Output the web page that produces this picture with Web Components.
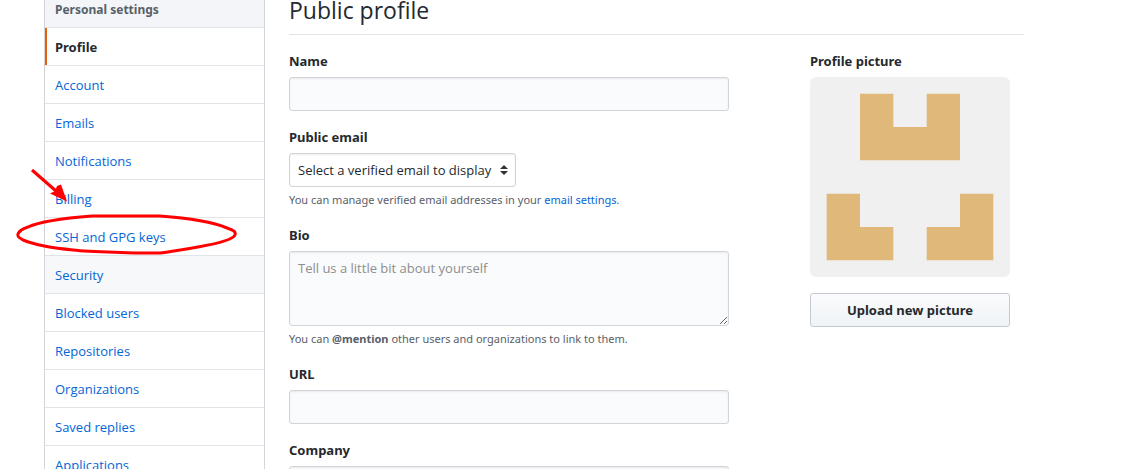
<!DOCTYPE html>
<html lang="en">
<head>
<meta charset="utf-8">
<meta name="viewport" content="width=device-width, initial-scale=1">
<title>Public profile</title>
<style>
html { overflow: hidden; }
body { margin: 0; background: #fff; color: #24292e; font: 13px/21px "Open Sans", "Noto Sans", sans-serif; --bold-font: "Noto Sans", "Open Sans", sans-serif; }
</style>
</head>
<body>
<settings-page>
  <settings-menu slot="menu" heading="Personal settings">
    <menu-item current>Profile</menu-item>
    <menu-item>Account</menu-item>
    <menu-item>Emails</menu-item>
    <menu-item>Notifications</menu-item>
    <menu-item>Billing</menu-item>
    <menu-item>SSH and GPG keys</menu-item>
    <menu-item active>Security</menu-item>
    <menu-item>Blocked users</menu-item>
    <menu-item>Repositories</menu-item>
    <menu-item>Organizations</menu-item>
    <menu-item>Saved replies</menu-item>
    <menu-item>Applications</menu-item>
  </settings-menu>
  <span slot="title">Public profile</span>
  <text-field label="Name"></text-field>
  <select-field label="Public email" option="Select a verified email to display">You can manage verified email addresses in your <hint-link>email settings</hint-link>.</select-field>
  <area-field label="Bio" placeholder="Tell us a little bit about yourself">You can <strong>@mention</strong> other users and organizations to link to them.</area-field>
  <text-field label="URL"></text-field>
  <text-field label="Company"></text-field>
  <profile-picture slot="picture"></profile-picture>
</settings-page>

<script>
const define = (name, render) => customElements.define(name, class extends HTMLElement {
  constructor() {
    super();
    this.attachShadow({ mode: "open" });
  }
  connectedCallback() {
    this.shadowRoot.innerHTML = render(this);
  }
});

const fieldStyles = `
  :host { display: block; }
  * { box-sizing: border-box; }
  label { display: block; padding-top: 1px; margin-bottom: 5px; font-family: var(--bold-font); font-weight: 700; }
  input, textarea, select {
    display: block; margin: 0; padding: 6px 8px; font: inherit; line-height: 20px; color: inherit;
    border: 1px solid #d1d5da; border-radius: 3px; background: #fafbfc;
    box-shadow: inset 0 1px 2px rgba(27, 31, 35, .075);
  }
  input { width: 100%; height: 34px; }
  .hint { margin: 4px 0 0; font-family: var(--bold-font); font-size: 11px; line-height: 18px; color: #586069; }`;

define("settings-page", () => `
  <style>
    :host { display: block; padding-left: 44px; margin-top: -10px; }
    .container { display: flex; gap: 24px; max-width: 980px; }
    aside { flex: 0 0 221px; }
    main { flex: 1; min-width: 0; }
    h1 { margin: 0 0 15px; padding-bottom: 4px; border-bottom: 1px solid #e1e4e8; font-size: 23px; line-height: 40px; font-weight: 400; }
    .columns { display: flex; justify-content: space-between; gap: 24px; padding-right: 14px; }
    form { flex: 0 1 440px; display: grid; gap: 15px; }
  </style>
  <div class="container">
    <aside><slot name="menu"></slot></aside>
    <main>
      <h1><slot name="title"></slot></h1>
      <div class="columns">
        <form><slot></slot></form>
        <slot name="picture"></slot>
      </div>
    </main>
  </div>`);

define("settings-menu", el => `
  <style>
    :host { display: block; position: relative; }
    nav { border: solid #d1d5da; border-width: 0 1px; }
    h2 { margin: 0; padding: 9px 10px 7px; font-family: var(--bold-font); font-size: 12px; line-height: 21px; color: #586069; background: #f3f5f8; border-bottom: 1px solid #e1e4e8; }
    svg { position: absolute; left: -44px; top: 10px; pointer-events: none; }
  </style>
  <nav aria-label="${el.getAttribute("heading")}">
    <h2>${el.getAttribute("heading")}</h2>
    <slot></slot>
  </nav>
  <svg width="250" height="270" viewBox="0 0 250 270" fill="none" stroke="#f00" aria-hidden="true">
    <path d="M32 170 L56 191" stroke-width="3"/>
    <path d="M67 201.500 L50 193.500 L55 191 L57 186 L61 184.500 Z" fill="#f00" stroke="none"/>
    <path d="M18 234 C19 231 22 229 28 227 C41 221 66 218 92 216 L160 216 C188 218 213 222 227 228 C234 230 236 232 235 235 C233 240 215 244 198 247 C186 249 175 251 160 253 L136 253 C112 252 90 252 73 250 C51 248 33 244 23 240 C18 237 17 236 18 234 Z" stroke-width="3"/>
  </svg>`);

define("menu-item", el => `
  <style>
    :host { display: block; }
    a { display: block; padding: 9px 10px 7px; color: #0366d6; text-decoration: none; border-bottom: 1px solid #e1e4e8; }
    :host([active]) a { background: #f6f8fa; }
    :host([current]) { position: relative; }
    :host([current]) a { font-family: var(--bold-font); font-weight: 700; color: #24292e; }
    :host([current]) a::before { content: ""; position: absolute; left: 0; top: 0; bottom: 1px; width: 2px; background: #e36209; }
  </style>
  <a href="#" ${el.hasAttribute("current") ? 'aria-current="page"' : ""}><slot></slot></a>`);

define("hint-link", () => `
  <style>
    :host { display: inline; }
    a { color: #0366d6; text-decoration: none; }
  </style><a href="#"><slot></slot></a>`);

define("text-field", el => `
  <style>${fieldStyles}</style>
  <label for="control">${el.getAttribute("label")}</label>
  <input id="control" type="text">`);

define("select-field", el => `
  <style>${fieldStyles}
    .select { position: relative; width: fit-content; }
    select { appearance: none; height: 34px; padding-right: 23px; background: #fff; }
    svg { position: absolute; right: 8px; top: 12px; pointer-events: none; }
  </style>
  <label for="control">${el.getAttribute("label")}</label>
  <div class="select">
    <select id="control"><option>${el.getAttribute("option")}</option></select>
    <svg width="8" height="10" viewBox="0 0 8 10" fill="#333" aria-hidden="true"><path d="M4 0 L8 4 H0 Z M0 6 H8 L4 10 Z"/></svg>
  </div>
  <p class="hint"><slot></slot></p>`);

define("area-field", el => `
  <style>${fieldStyles}
    textarea { width: 100%; height: 75px; resize: vertical; }
    textarea::placeholder { color: #8e8e8e; }
  </style>
  <label for="control">${el.getAttribute("label")}</label>
  <textarea id="control" placeholder="${el.getAttribute("placeholder")}"></textarea>
  <p class="hint"><slot></slot></p>`);

define("profile-picture", () => `
  <style>
    :host { display: block; flex: 0 0 200px; }
    h2 { margin: 0 0 5px; padding-top: 1px; font-family: var(--bold-font); font-size: 13px; line-height: 21px; }
    svg { display: block; width: 100%; border-radius: 6px; background: #f0f0f0; }
    button {
      width: 100%; height: 34px; margin-top: 16px; padding: 0 12px; font: inherit; font-family: var(--bold-font); font-weight: 700; color: #24292e;
      border: 1px solid #c6cace; border-radius: 3px; background: linear-gradient(#fafbfc, #eff3f6); cursor: pointer;
    }
  </style>
  <h2>Profile picture</h2>
  <svg viewBox="0 0 12 12" fill="#e0b97a" role="img" aria-label="Profile picture">
    <path d="M3 1h2v2h2V1h2v4H3z M1 7h2v2h2v2H1z M9 7h2v4H7V9h2z"/>
  </svg>
  <button type="button">Upload new picture</button>`);
</script>
</body>
</html>
